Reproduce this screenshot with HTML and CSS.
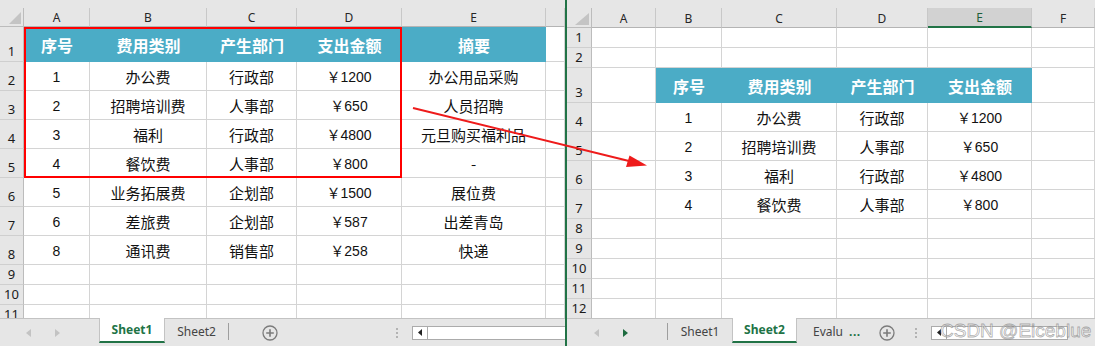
FILE: index.html
```html
<!DOCTYPE html>
<html lang="zh">
<head>
<meta charset="utf-8">
<title>Excel 复制区域</title>
<link rel="stylesheet" href="styles.css">
</head>
<body>
<div class="screen">
  <section class="window left">
    <div class="topstrip"></div>
    <div class="sheet sheet-left">
      <div class="corner"><svg width="12" height="12" viewBox="0 0 12 12"><polygon points="12,0 12,12 0,12" fill="#c4c4c4"/></svg></div>
      <div class="ch">A</div><div class="ch">B</div><div class="ch">C</div><div class="ch">D</div><div class="ch">E</div><div class="ch"></div>

      <div class="rh">1</div><div class="h">序号</div><div class="h">费用类别</div><div class="h">产生部门</div><div class="h">支出金额</div><div class="h">摘要</div><div class="c"></div>
      <div class="rh">2</div><div class="c n">1</div><div class="c">办公费</div><div class="c">行政部</div><div class="c n">￥1200</div><div class="c">办公用品采购</div><div class="c"></div>
      <div class="rh">3</div><div class="c n">2</div><div class="c">招聘培训费</div><div class="c">人事部</div><div class="c n">￥650</div><div class="c">人员招聘</div><div class="c"></div>
      <div class="rh">4</div><div class="c n">3</div><div class="c">福利</div><div class="c">行政部</div><div class="c n">￥4800</div><div class="c">元旦购买福利品</div><div class="c"></div>
      <div class="rh">5</div><div class="c n">4</div><div class="c">餐饮费</div><div class="c">人事部</div><div class="c n">￥800</div><div class="c">-</div><div class="c"></div>
      <div class="rh">6</div><div class="c n">5</div><div class="c">业务拓展费</div><div class="c">企划部</div><div class="c n">￥1500</div><div class="c">展位费</div><div class="c"></div>
      <div class="rh">7</div><div class="c n">6</div><div class="c">差旅费</div><div class="c">企划部</div><div class="c n">￥587</div><div class="c">出差青岛</div><div class="c"></div>
      <div class="rh">8</div><div class="c n">8</div><div class="c">通讯费</div><div class="c">销售部</div><div class="c n">￥258</div><div class="c">快递</div><div class="c"></div>
      <div class="rh">9</div><div class="c"></div><div class="c"></div><div class="c"></div><div class="c"></div><div class="c"></div><div class="c"></div>
      <div class="rh">10</div><div class="c"></div><div class="c"></div><div class="c"></div><div class="c"></div><div class="c"></div><div class="c"></div>
      <div class="rh">11</div><div class="c"></div><div class="c"></div><div class="c"></div><div class="c"></div><div class="c"></div><div class="c"></div>
    </div>
    <div class="tabbar tabbar-left">
      <div class="nav">
        <svg class="arrow" width="5" height="8" viewBox="0 0 5 8"><polygon points="5,0 5,8 0,4" fill="#c3c3c3"/></svg>
        <svg class="arrow" width="5" height="8" viewBox="0 0 5 8"><polygon points="0,0 0,8 5,4" fill="#c3c3c3"/></svg>
      </div>
      <div class="tab active w66">Sheet1</div>
      <div class="tab w63">Sheet2</div>
      <div class="sep"></div>
      <svg class="plus plus-left" width="16" height="16" viewBox="0 0 16 16"><circle cx="8" cy="8" r="7" fill="none" stroke="#7b7b7b" stroke-width="1.3"/><path d="M8 4.2v7.6M4.2 8h7.6" stroke="#7b7b7b" stroke-width="1.6"/></svg>
      <div class="dots dots-left"><i></i><i></i><i></i></div>
      <div class="scroll scroll-left"><div class="sbtn"><svg width="4" height="7" viewBox="0 0 4 7"><polygon points="4,0 4,7 0,3.5" fill="#222"/></svg></div></div>
    </div>
  </section>

  <div class="divider"></div>

  <section class="window right">
    <div class="topstrip"></div>
    <div class="sheet sheet-right">
      <div class="corner"><svg width="14" height="12" viewBox="0 0 14 12"><polygon points="14,0 14,12 0,12" fill="#c4c4c4"/></svg></div>
      <div class="ch">A</div><div class="ch">B</div><div class="ch">C</div><div class="ch">D</div><div class="ch sel">E</div><div class="ch">F</div>

      <div class="rh">1</div><div class="c"></div><div class="c"></div><div class="c"></div><div class="c"></div><div class="c"></div><div class="c"></div>
      <div class="rh">2</div><div class="c"></div><div class="c"></div><div class="c"></div><div class="c"></div><div class="c"></div><div class="c"></div>
      <div class="rh">3</div><div class="c"></div><div class="h">序号</div><div class="h">费用类别</div><div class="h">产生部门</div><div class="h">支出金额</div><div class="c"></div>
      <div class="rh">4</div><div class="c"></div><div class="c n">1</div><div class="c">办公费</div><div class="c">行政部</div><div class="c n">￥1200</div><div class="c"></div>
      <div class="rh">5</div><div class="c"></div><div class="c n">2</div><div class="c">招聘培训费</div><div class="c">人事部</div><div class="c n">￥650</div><div class="c"></div>
      <div class="rh">6</div><div class="c"></div><div class="c n">3</div><div class="c">福利</div><div class="c">行政部</div><div class="c n">￥4800</div><div class="c"></div>
      <div class="rh">7</div><div class="c"></div><div class="c n">4</div><div class="c">餐饮费</div><div class="c">人事部</div><div class="c n">￥800</div><div class="c"></div>
      <div class="rh">8</div><div class="c"></div><div class="c"></div><div class="c"></div><div class="c"></div><div class="c"></div><div class="c"></div>
      <div class="rh">9</div><div class="c"></div><div class="c"></div><div class="c"></div><div class="c"></div><div class="c"></div><div class="c"></div>
      <div class="rh">10</div><div class="c"></div><div class="c"></div><div class="c"></div><div class="c"></div><div class="c"></div><div class="c"></div>
      <div class="rh">11</div><div class="c"></div><div class="c"></div><div class="c"></div><div class="c"></div><div class="c"></div><div class="c"></div>
      <div class="rh">12</div><div class="c"></div><div class="c"></div><div class="c"></div><div class="c"></div><div class="c"></div><div class="c"></div>
    </div>
    <div class="tabbar tabbar-right">
      <div class="nav nav-right">
        <svg class="arrow" width="5" height="8" viewBox="0 0 5 8"><polygon points="5,0 5,8 0,4" fill="#c3c3c3"/></svg>
        <svg class="arrow" width="5" height="8" viewBox="0 0 5 8"><polygon points="0,0 0,8 5,4" fill="#1d6b3f"/></svg>
      </div>
      <div class="sep sep-first"></div>
      <div class="tab w64">Sheet1</div>
      <div class="tab active w65">Sheet2</div>
      <div class="tab evalu">Evalu<span class="more">...</span></div>
      <svg class="plus plus-right" width="16" height="16" viewBox="0 0 16 16"><circle cx="8" cy="8" r="7" fill="none" stroke="#7b7b7b" stroke-width="1.3"/><path d="M8 4.2v7.6M4.2 8h7.6" stroke="#7b7b7b" stroke-width="1.6"/></svg>
      <div class="dots dots-right"><i></i><i></i><i></i></div>
      <div class="scroll scroll-right"><div class="sbtn"><svg width="4" height="7" viewBox="0 0 4 7"><polygon points="4,0 4,7 0,3.5" fill="#222"/></svg></div></div>
    </div>
  </section>

  <div class="selection-box"></div>
  <svg class="arrow-overlay" width="1095" height="346" viewBox="0 0 1095 346">
    <line x1="413" y1="108" x2="631" y2="161.5" stroke="#ee1b1b" stroke-width="2"/>
    <polygon points="647,165.5 626,167 629.5,155.5" fill="#ee1b1b"/>
  </svg>
  <div class="watermark">CSDN @Eiceblue</div>
</div>
</body>
</html>
```

FILE: styles.css
```css
html, body {
  margin: 0;
  padding: 0;
  background: #ffffff;
}

.screen {
  position: relative;
  display: flex;
  width: 1095px;
  height: 346px;
  overflow: hidden;
  font-family: "Noto Sans", "Liberation Sans", sans-serif;
}

.window {
  display: flex;
  flex-direction: column;
  background: #e6e6e6;
  overflow: hidden;
}

.left { width: 565px; }
.right { width: 528px; }

.divider {
  width: 2px;
  background: #217346;
}

.topstrip {
  height: 8px;
  background: #e6e6e6;
  flex: none;
}

.sheet {
  display: grid;
  height: 310px;
  overflow: hidden;
  background: #ffffff;
  flex: none;
}

.sheet-left {
  grid-template-columns: 24px 66px 117px 90px 105px 144px 19px;
  grid-template-rows: 19px 35px repeat(7, 29px) 20px 20px 20px;
}

.sheet-right {
  grid-template-columns: 25px 64px 66px 115px 91px 104px 63px;
  grid-template-rows: 20px 20px 20px 35px repeat(4, 29px) repeat(5, 20px);
}

.sheet > div {
  box-sizing: border-box;
  min-width: 0;
}

.corner {
  background: #e6e6e6;
  border-right: 1px solid #bcbcbc;
  border-bottom: 1px solid #bcbcbc;
  display: flex;
  align-items: flex-end;
  justify-content: flex-end;
  padding: 0 2px 2px 0;
}

.corner svg { display: block; }

.ch {
  background: #e6e6e6;
  border-right: 1px solid #c8c8c8;
  border-bottom: 1px solid #b4b4b4;
  display: flex;
  align-items: center;
  justify-content: center;
  font-size: 12px;
  color: #262626;
  padding-top: 1px;
}

.ch.sel {
  background: #d2d2d2;
  border-bottom: 2px solid #217346;
  color: #1f5f3a;
}

.rh {
  background: #e6e6e6;
  border-right: 1px solid #bcbcbc;
  border-bottom: 1px solid #cfcfcf;
  display: flex;
  align-items: flex-end;
  justify-content: center;
  font-size: 13px;
  line-height: 16px;
  color: #1a1a1a;
  padding-bottom: 2px;
}

.c {
  border-right: 1px solid #d4d4d4;
  border-bottom: 1px solid #d4d4d4;
  display: flex;
  align-items: flex-end;
  justify-content: center;
  font-family: "Noto Sans CJK SC", "Noto Sans", sans-serif;
  font-size: 15px;
  line-height: 20px;
  color: #111111;
  padding-bottom: 3px;
  white-space: nowrap;
}

.c.n {
  font-family: "Liberation Sans", "Noto Sans CJK SC", sans-serif;
  font-size: 14px;
}

.h {
  background: #4bacc6;
  border-bottom: 1px solid #4bacc6;
  display: flex;
  align-items: center;
  justify-content: center;
  font-family: "Noto Sans CJK SC", "Noto Sans", sans-serif;
  font-weight: 700;
  font-size: 16px;
  color: #ffffff;
  padding-top: 1px;
  white-space: nowrap;
}

/* tab bar */
.tabbar {
  display: flex;
  align-items: stretch;
  height: 28px;
  box-sizing: border-box;
  border-top: 1px solid #c3c3c3;
  background: #e6e6e6;
  font-size: 12px;
  color: #444444;
  flex: none;
}

.nav {
  display: flex;
  align-items: center;
  width: 99px;
  box-sizing: border-box;
  padding-left: 26px;
  gap: 24px;
  flex: none;
}

.nav-right {
  width: 100px;
  padding-left: 27px;
}

.arrow { display: block; }

.tab {
  display: flex;
  align-items: center;
  justify-content: center;
  flex: none;
  padding-bottom: 2px;
}

.tab.active {
  background: #ffffff;
  color: #217346;
  font-weight: 700;
  margin-top: -1px;
  margin-bottom: 3px;
  border-bottom: 2px solid #217346;
  border-left: 1px solid #c3c3c3;
  border-right: 1px solid #c3c3c3;
  box-sizing: border-box;
  padding-bottom: 0;
}

.w63 { width: 63px; }
.w64 { width: 64px; }
.w65 { width: 65px; }
.w66 { width: 66px; }

.evalu {
  justify-content: flex-start;
  padding-left: 16px;
  width: 74px;
  box-sizing: border-box;
}

.more {
  color: #217346;
  font-weight: 700;
  margin-left: 6px;
  letter-spacing: 0.5px;
}

.sep {
  width: 1px;
  background: #9e9e9e;
  margin: 4px 0 6px;
  flex: none;
}

.plus {
  align-self: center;
  flex: none;
  display: block;
}

.plus-left { margin-left: 33px; }
.plus-right { margin-left: 8px; }

.dots {
  display: flex;
  flex-direction: column;
  align-self: center;
  gap: 2px;
  flex: none;
}

.dots i {
  display: block;
  width: 2px;
  height: 2px;
  background: #b3b3b3;
}

.dots-left { margin-left: 118px; }
.dots-right { margin-left: 20px; }

.scroll {
  align-self: center;
  height: 14px;
  box-sizing: border-box;
  border: 1px solid #ababab;
  background: #ffffff;
  display: flex;
  flex: none;
}

.scroll-left {
  margin-left: 14px;
  flex: 1;
  border-right: none;
}

.scroll-right {
  margin-left: 14px;
  width: 137px;
}

.sbtn {
  width: 15px;
  height: 100%;
  box-sizing: border-box;
  border-right: 1px solid #ababab;
  display: flex;
  align-items: center;
  justify-content: center;
}

.sbtn svg { display: block; }

/* overlays */
.selection-box {
  position: absolute;
  left: 24px;
  top: 27px;
  width: 378px;
  height: 151px;
  box-sizing: border-box;
  border: 2px solid #ff0000;
  pointer-events: none;
}

.arrow-overlay {
  position: absolute;
  left: 0;
  top: 0;
  pointer-events: none;
}

.watermark {
  position: absolute;
  left: 940px;
  top: 320px;
  font-family: "Liberation Sans", Arial, sans-serif;
  font-size: 19px;
  line-height: 22px;
  color: rgba(255, 255, 255, 0.55);
  -webkit-text-stroke: 0.8px rgba(120, 120, 120, 0.6);
  white-space: nowrap;
  pointer-events: none;
}
```
